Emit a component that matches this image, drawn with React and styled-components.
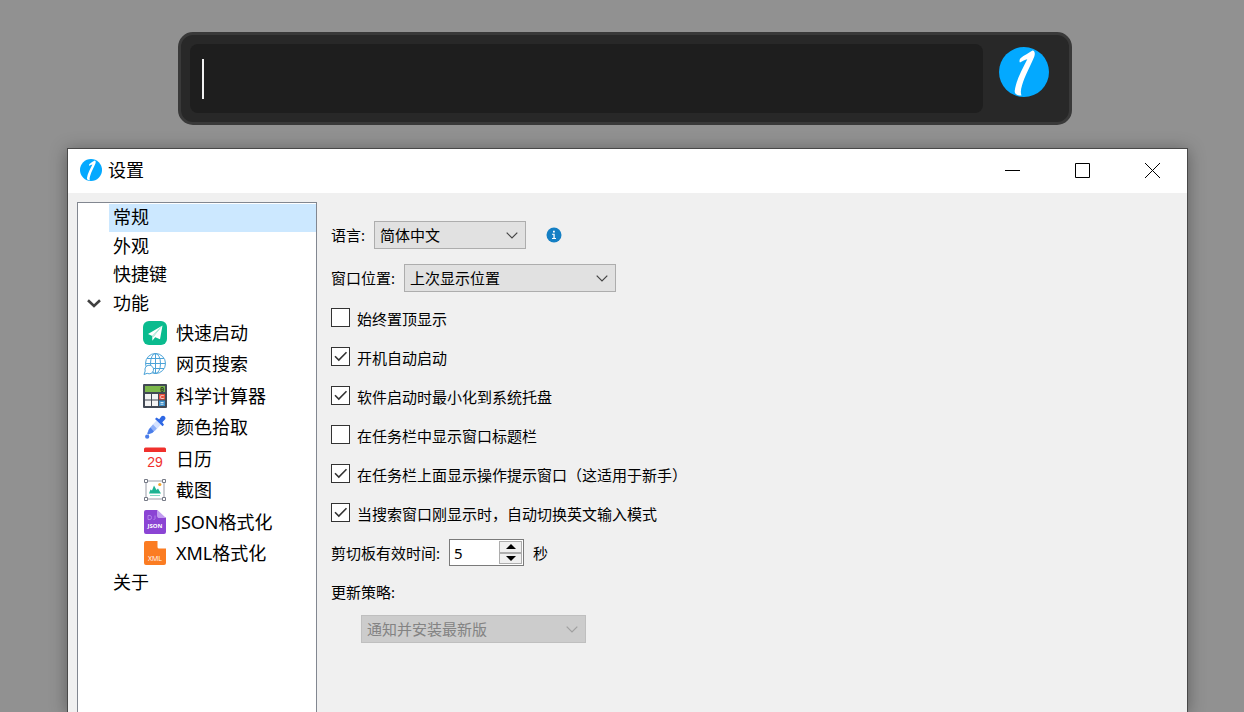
import React, { useState } from "react";
import styled, { createGlobalStyle } from "styled-components";

const GlobalStyle = createGlobalStyle`
  * {
    box-sizing: border-box;
  }

  body {
    margin: 0;
    background: #919191;
    color: #000;
    font-family: "Noto Sans", "Noto Sans CJK SC", sans-serif;
    font-size: 15px;
    line-height: 20px;
    overflow: hidden;
  }

  button, input, select {
    font: inherit;
    color: inherit;
    margin: 0;
  }
`;

const Desktop = styled.div`
  min-height: 100vh;
  display: flex;
  flex-direction: column;
  gap: 23px;
  padding-top: 32px;
`;

const SearchBar = styled.header`
  display: flex;
  align-items: center;
  gap: 16px;
  margin: 0 172px 0 178px;
  padding: 9px 20px 9px 9px;
  background: #282828;
  border: 3px solid #393939;
  border-radius: 15px;
`;

const SearchField = styled.div`
  position: relative;
  flex: 1;
`;

const SearchInput = styled.input`
  display: block;
  width: 100%;
  height: 69px;
  padding: 0 12px;
  background: #1e1e1e;
  border: none;
  border-radius: 8px;
  outline: none;
  color: #f0f0f0;
  font-size: 30px;
  caret-color: transparent;
`;

const Caret = styled.span`
  position: absolute;
  left: 12px;
  top: 15px;
  width: 2px;
  height: 40px;
  background: #f0f0f0;
`;

const LogoButton = styled.button`
  display: flex;
  padding: 0 0 13px;
  background: none;
  border: none;
`;

const Window = styled.main`
  flex: 1;
  display: flex;
  flex-direction: column;
  margin: 0 56px 0 67px;
  background: #f0f0f0;
  border: 1px solid #484848;
  border-bottom: none;
  box-shadow: 0 2px 16px rgba(0, 0, 0, 0.35);
`;

const TitleBar = styled.div`
  display: flex;
  align-items: center;
  height: 44px;
  padding: 0 0 2px 12px;
  background: #fff;
`;

const Title = styled.h1`
  flex: 1;
  margin: 0 0 0 6px;
  font-size: 18px;
  font-weight: 400;
  line-height: 24px;
`;

const WindowButton = styled.button`
  display: flex;
  align-items: center;
  justify-content: center;
  width: 70px;
  height: 42px;
  padding: 0;
  background: none;
  border: none;
`;

const Content = styled.div`
  flex: 1;
  display: flex;
  padding: 9px 9px 0;
`;

const Tree = styled.nav`
  width: 240px;
  padding-top: 1px;
  background: #fff;
  border: 1px solid #828790;
  border-bottom: none;
`;

const TreeList = styled.ul`
  margin: 0;
  padding: 0;
  list-style: none;
`;

const ChildList = styled(TreeList)`
  margin-top: -1px;
`;

const TreeItem = styled.li`
  font-size: 18px;
`;

const TreeRow = styled.div`
  display: flex;
  align-items: center;
  height: 28px;

  ${TreeItem}:nth-child(even) > & {
    height: 29px;
  }
`;

const TreeToggle = styled.button`
  display: flex;
  justify-content: center;
  width: 31px;
  padding: 0;
  background: none;
  border: none;
`;

const TreeButton = styled.button`
  flex: 1;
  align-self: stretch;
  margin-left: ${(props) => (props.$indent ? "31px" : "0")};
  padding: 0 4px 2px;
  background: ${(props) => (props.$selected ? "#cce8ff" : "none")};
  border: none;
  text-align: left;
`;

const ChildItem = styled.li`
  display: flex;
  height: 31px;
  padding-left: 61px;

  &:nth-child(even) {
    height: 32px;
  }
`;

const ChildButton = styled.button`
  flex: 1;
  display: flex;
  align-items: center;
  gap: 9px;
  padding: 0 4px;
  background: none;
  border: none;
  text-align: left;
`;

const Form = styled.form`
  flex: 1;
  display: flex;
  flex-direction: column;
  padding: 11px 14px 0;
`;

const FormRow = styled.div`
  display: flex;
  align-items: center;
  gap: 9px;
  min-height: ${(props) => (props.$tall ? "43px" : "39px")};
`;

const SelectBox = styled.div`
  position: relative;
  width: ${(props) => props.$width}px;
  color: ${(props) => (props.$disabled ? "#838383" : "#000")};

  svg {
    position: absolute;
    right: 8px;
    top: 11px;
    pointer-events: none;
  }
`;

const StyledSelect = styled.select`
  display: block;
  width: 100%;
  height: 28px;
  padding: 0 24px 0 5px;
  appearance: none;
  background: #e1e1e1;
  border: 1px solid #adadad;
  border-radius: 0;

  &:disabled {
    background: #cccccc;
    border-color: #bfbfbf;
    opacity: 1;
  }
`;

const InfoButton = styled.button`
  display: flex;
  margin-left: 11px;
  padding: 0;
  background: none;
  border: none;
`;

const CheckLabel = styled.label`
  display: flex;
  align-items: center;
  gap: 7px;
  height: 39px;
`;

const CheckBox = styled.span`
  position: relative;
  display: flex;
  margin-bottom: 3px;

  svg {
    position: absolute;
    left: 3px;
    top: 4px;
    pointer-events: none;
  }
`;

const CheckInput = styled.input`
  width: 19px;
  height: 19px;
  appearance: none;
  background: #fff;
  border: 1px solid #333;
`;

const SpinBox = styled.div`
  display: flex;
  width: 75px;
  height: 27px;
  padding: 1px;
  background: #fff;
  border: 1px solid #7a7a7a;
`;

const SpinInput = styled.input`
  flex: 1;
  min-width: 0;
  padding: 0 3px;
  border: none;
  outline: none;
  background: none;
`;

const SpinButtons = styled.div`
  display: grid;
  grid-template-rows: 1fr 1fr;
  width: 23px;
`;

const SpinButton = styled.button`
  display: flex;
  align-items: center;
  justify-content: center;
  min-height: 0;
  padding: 0;
  background: #f0f0f0;
  border: 1px solid #adadad;
`;

const Indented = styled.div`
  padding: 4px 0 0 30px;
`;

const Logo = ({ size }) => (
  <svg width={size} height={size} viewBox="0 0 50 50" aria-hidden="true">
    <circle cx="25" cy="25" r="25" fill="#03a9ff" />
    <path
      fill="#fff"
      d="M33.5 3.6C30 6 25 8.500 21.500 11.200C20.300 12.500 20.200 14.600 21 15.600C23.500 14 26 12.800 28.300 12.300C23.500 22 17 33 15.700 44C15.500 47 18 48.600 22.500 48.500C21.300 45.500 21.900 42 23 38.500C25.500 29.500 32 18 35.300 9.500C36.300 6.500 35.800 3.800 33.500 3.600Z"
    />
  </svg>
);

const SelectArrow = ({ muted }) => (
  <svg width="12" height="7" viewBox="0 0 12 7" aria-hidden="true">
    <path d="M0.700 0.700 6 6l5.300-5.300" fill="none" stroke={muted ? "#a0a0a0" : "#444"} strokeWidth="1.2" />
  </svg>
);

const PlaneIcon = () => (
  <svg width="24" height="24" viewBox="0 0 24 24" aria-hidden="true">
    <rect width="24" height="24" rx="6" fill="#0abb8e" />
    <path d="M19.500 4.500 5 13l4.300 2zM19.500 4.500 10.500 15.500l6.500 2.800zM9.300 15v4.700l2.900-3.500z" fill="#fff" />
    <path d="M19.500 4.500 9.300 15l1.200.5z" fill="#d2f3ea" />
  </svg>
);

const GlobeIcon = () => (
  <svg width="24" height="24" viewBox="0 0 24 24" fill="none" stroke="#4ba3d8" aria-hidden="true">
    <circle cx="12.500" cy="11.500" r="10" />
    <ellipse cx="12.500" cy="11.500" rx="5" ry="10" />
    <path d="M12.500 1.500v20M2.500 11.500h20M4 6.500h17M4 16.500h17" />
    <path d="M1 22.500l1.200-3.500a4.300 4.300 0 1 1 2 2.300z" fill="#fff" />
  </svg>
);

const CalculatorIcon = () => (
  <svg width="24" height="24" viewBox="0 0 24 24" aria-hidden="true">
    <rect width="24" height="24" rx="1" fill="#424954" />
    <rect x="2" y="2" width="20" height="6" fill="#7cb84b" />
    <text x="17" y="8" fontSize="7" fontWeight="700" fontFamily="Liberation Mono, monospace" fill="#26331d">0</text>
    <path d="M2 10h6v5.500H2zM9 10h6v5.500H9zM2 16.500h6V22H2zM9 16.500h6V22H9z" fill="#f4f4f4" />
    <path d="M16 10h6v5.500h-6z" fill="#e64c3c" />
    <path d="M16 16.500h6V22h-6z" fill="#3f8fc8" />
    <text x="17" y="15" fontSize="6" fontFamily="Liberation Sans, sans-serif" fill="#fff">C</text>
    <path d="M17.500 18.500h3M17.500 20.200h3" stroke="#fff" strokeWidth="0.8" />
  </svg>
);

const DropperIcon = () => (
  <svg width="24" height="24" viewBox="0 0 24 24" aria-hidden="true">
    <path d="M13.500 5.500 7.500 12l4.300 4.300 6-6.500z" fill="#d5e2ff" />
    <path d="M10 9.500 6 14c-1.200 1.500-.8 2.700-1.800 4.300l1.200 1.200c1.700-1 3-.7 4.400-1.900l4-4z" fill="#8fb0f8" />
    <path d="M7.500 12.500C5 15 6 16.500 4.200 18.300l1.200 1.200c1.700-1.200 3.400-1 5.400-3z" fill="#4a7de9" />
    <path d="M12 4 13.500 2.500l2.700 1.700L18.500 1.300c2-2 5.200 1 3.500 3.200l-2.700 2.700 1.700 2.600-1.500 1.500z" fill="#2f68e4" />
    <circle cx="4.200" cy="21.700" r="2.100" fill="#4a7de9" />
  </svg>
);

const CalendarIcon = () => (
  <svg width="24" height="24" viewBox="0 0 24 24" aria-hidden="true">
    <path d="M1 5V2a1.500 1.500 0 0 1 1.500-1.500h19A1.500 1.500 0 0 1 23 2v3z" fill="#f0302c" />
    <text x="12" y="20" fontSize="14" textAnchor="middle" fontFamily="Liberation Sans, sans-serif" fill="#f0302c">29</text>
  </svg>
);

const ScreenshotIcon = () => (
  <svg width="24" height="24" viewBox="0 0 24 24" aria-hidden="true">
    <path d="M3 3h18v18H3z" fill="none" stroke="#9a9da8" />
    <path d="M1.500 1.500h3v3h-3zM19.500 1.500h3v3h-3zM1.500 19.500h3v3h-3zM19.500 19.500h3v3h-3z" fill="#fff" stroke="#767a86" />
    <path d="M6 15.500 7.500 11.500 9 12.500 11 7.500l2.500 4.500 1.500-1.500 3 5z" fill="#1cb392" />
    <path d="M7 17.500h10" stroke="#85d8c6" />
    <circle cx="16.800" cy="6.500" r="1.600" fill="#f3a32b" />
  </svg>
);

const FileIcon = ({ color, fold, label }) => (
  <svg width="24" height="24" viewBox="0 0 24 24" aria-hidden="true">
    <path d="M3 0h11.500v6A1.500 1.500 0 0 0 16 7.500h7V22a2 2 0 0 1-2 2H3a2 2 0 0 1-2-2V2a2 2 0 0 1 2-2z" fill={color} />
    {fold && (
      <>
        <path d="M14.500 0 23 8h-7a1.500 1.500 0 0 1-1.500-1.500z" fill={fold} />
        <path d="M5 5.500h2q1.500 0 1.500 2t-1.500 2H5zM12 5.500v3q0 1-1.500 1" fill="none" stroke={fold} strokeWidth="0.7" />
      </>
    )}
    <text x="12" y="18" dy={fold ? 0 : 2} fontSize={fold ? 6 : 7} textAnchor="middle" fontWeight={fold ? 700 : 500} fontFamily="Open Sans, sans-serif" fill="#fff">
      {label}
    </text>
  </svg>
);

const features = [
  { title: "快速启动", icon: <PlaneIcon /> },
  { title: "网页搜索", icon: <GlobeIcon /> },
  { title: "科学计算器", icon: <CalculatorIcon /> },
  { title: "颜色拾取", icon: <DropperIcon /> },
  { title: "日历", icon: <CalendarIcon /> },
  { title: "截图", icon: <ScreenshotIcon /> },
  { title: "JSON格式化", icon: <FileIcon color="#8b44d4" fold="#c29cf0" label="JSON" /> },
  { title: "XML格式化", icon: <FileIcon color="#fb7c22" label="XML" /> },
];

const options = [
  { id: "top", text: "始终置顶显示", checked: false },
  { id: "boot", text: "开机自动启动", checked: true },
  { id: "tray", text: "软件启动时最小化到系统托盘", checked: true },
  { id: "taskbar", text: "在任务栏中显示窗口标题栏", checked: false },
  { id: "hint", text: "在任务栏上面显示操作提示窗口（这适用于新手）", checked: true },
  { id: "ime", text: "当搜索窗口刚显示时，自动切换英文输入模式", checked: true },
];

const Select = ({ id, width, disabled, values }) => (
  <SelectBox $width={width} $disabled={disabled}>
    <StyledSelect id={id} disabled={disabled}>
      {values.map((value) => (
        <option key={value}>{value}</option>
      ))}
    </StyledSelect>
    <SelectArrow muted={disabled} />
  </SelectBox>
);

const Option = ({ option }) => {
  const [checked, setChecked] = useState(option.checked);

  return (
    <CheckLabel htmlFor={option.id}>
      <CheckBox>
        <CheckInput
          id={option.id}
          type="checkbox"
          checked={checked}
          onChange={(e) => setChecked(e.target.checked)}
        />
        {checked && (
          <svg width="14" height="11" viewBox="0 0 14 11" aria-hidden="true">
            <path d="M1 5.200 4.800 9 12.500 1.300" fill="none" stroke="#333" strokeWidth="1.6" />
          </svg>
        )}
      </CheckBox>
      {option.text}
    </CheckLabel>
  );
};

const NavTree = () => {
  const [selected, setSelected] = useState("常规");
  const [open, setOpen] = useState(true);

  const renderItem = (name) => (
    <TreeItem key={name}>
      <TreeRow>
        <TreeButton $indent $selected={selected === name} onClick={() => setSelected(name)}>
          {name}
        </TreeButton>
      </TreeRow>
    </TreeItem>
  );

  return (
    <Tree>
      <TreeList>
        {["常规", "外观", "快捷键"].map(renderItem)}
        <TreeItem>
          <TreeRow>
            <TreeToggle aria-label="功能" aria-expanded={open} onClick={() => setOpen(!open)}>
              <svg width="14" height="9" viewBox="0 0 14 9" aria-hidden="true">
                <path d="M1 1.300 7 7l6-5.700" fill="none" stroke="#404040" strokeWidth="2.600" />
              </svg>
            </TreeToggle>
            <TreeButton $selected={selected === "功能"} onClick={() => setSelected("功能")}>
              功能
            </TreeButton>
          </TreeRow>
          {open && (
            <ChildList>
              {features.map((feature) => (
                <ChildItem key={feature.title}>
                  <ChildButton>
                    {feature.icon}
                    {feature.title}
                  </ChildButton>
                </ChildItem>
              ))}
            </ChildList>
          )}
        </TreeItem>
        {renderItem("关于")}
      </TreeList>
    </Tree>
  );
};

const SettingsForm = () => {
  const [seconds, setSeconds] = useState(5);

  return (
    <Form>
      <FormRow $tall>
        <label htmlFor="language">语言:</label>
        <Select id="language" width={152} values={["简体中文", "English"]} />
        <InfoButton type="button" aria-label="语言">
          <svg width="16" height="16" viewBox="0 0 16 16" aria-hidden="true">
            <circle cx="8" cy="8" r="7.500" fill="#147fc4" />
            <path d="M7 3.800h1.800v1.600H7zM6 6.800h2.700v4.200H10v1H6v-1h1.400V7.800H6z" fill="#fff" />
          </svg>
        </InfoButton>
      </FormRow>
      <FormRow $tall>
        <label htmlFor="position">窗口位置:</label>
        <Select id="position" width={212} values={["上次显示位置"]} />
      </FormRow>
      {options.map((option) => (
        <Option key={option.id} option={option} />
      ))}
      <FormRow>
        <label htmlFor="clipboard">剪切板有效时间:</label>
        <SpinBox>
          <SpinInput
            id="clipboard"
            value={seconds}
            onChange={(e) => setSeconds(Number(e.target.value) || 0)}
          />
          <SpinButtons>
            <SpinButton type="button" aria-label="+" onClick={() => setSeconds(seconds + 1)}>
              <svg width="10" height="5" viewBox="0 0 10 5" aria-hidden="true">
                <path d="M0 5 5 0l5 5z" />
              </svg>
            </SpinButton>
            <SpinButton type="button" aria-label="-" onClick={() => setSeconds(seconds - 1)}>
              <svg width="10" height="5" viewBox="0 0 10 5" aria-hidden="true">
                <path d="M0 0l5 5 5-5z" />
              </svg>
            </SpinButton>
          </SpinButtons>
        </SpinBox>
        秒
      </FormRow>
      <FormRow>
        <label htmlFor="update">更新策略:</label>
      </FormRow>
      <Indented>
        <Select id="update" width={225} disabled values={["通知并安装最新版"]} />
      </Indented>
    </Form>
  );
};

const App = () => (
  <>
    <GlobalStyle />
    <Desktop>
      <SearchBar>
        <SearchField>
          <SearchInput type="text" aria-label="搜索" />
          <Caret />
        </SearchField>
        <LogoButton aria-label="设置">
          <Logo size={50} />
        </LogoButton>
      </SearchBar>
      <Window>
        <TitleBar>
          <Logo size={22} />
          <Title>设置</Title>
          <WindowButton aria-label="最小化">
            <svg width="15" height="15" viewBox="0 0 15 15" aria-hidden="true">
              <path d="M0 7.500h15" stroke="#000" />
            </svg>
          </WindowButton>
          <WindowButton aria-label="最大化">
            <svg width="15" height="15" viewBox="0 0 15 15" aria-hidden="true">
              <path d="M0.500 0.500h14v14h-14z" fill="none" stroke="#000" />
            </svg>
          </WindowButton>
          <WindowButton aria-label="关闭">
            <svg width="15" height="15" viewBox="0 0 15 15" aria-hidden="true">
              <path d="M0 0l15 15M15 0 0 15" stroke="#000" />
            </svg>
          </WindowButton>
        </TitleBar>
        <Content>
          <NavTree />
          <SettingsForm />
        </Content>
      </Window>
    </Desktop>
  </>
);

export default App;
